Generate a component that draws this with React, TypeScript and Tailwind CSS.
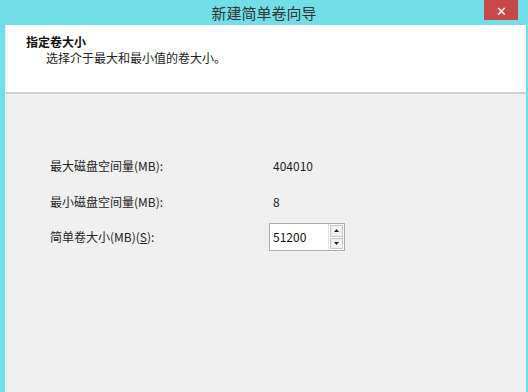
import React from 'react';

const font = { fontFamily: '"Noto Sans CJK SC", "Liberation Sans", sans-serif' };

const Row: React.FC<{ label: React.ReactNode; children: React.ReactNode; h: string }> = ({ label, children, h }) => (
  <div className={`flex items-center ${h}`}>
    <div className="w-[223px] text-[12px] text-[#222]">{label}</div>
    <div className="text-[12px] text-[#222]">{children}</div>
  </div>
);

export default function App() {
  return (
    <div className="w-[528px] h-[392px] bg-[#72dfe8] flex flex-col overflow-hidden" style={font}>
      {/* title bar */}
      <div className="h-[25px] flex items-start relative">
        <div className="flex-1 text-center text-[15px] leading-[25px] text-[#333]">新建简单卷向导</div>
        <div className="absolute right-[10px] top-0 w-[34px] h-[20px] bg-[#c7474b] flex items-center justify-center text-white text-[13px] leading-none">✕</div>
      </div>
      <div className="flex-1 ml-[5px] mr-[2px] border-l border-[#dff7f9] flex flex-col bg-[#f0f0f0]">
        {/* header */}
        <div className="h-[69px] bg-white pl-[20px] pt-[8px] border-b-2 border-[#d0d0d0]">
          <div className="text-[12px] font-bold text-[#111] leading-[17px]">指定卷大小</div>
          <div className="text-[12px] text-[#222] pl-[20px] leading-[16px]">选择介于最大和最小值的卷大小。</div>
        </div>
        {/* body */}
        <div className="pl-[44px] pt-[54px] flex flex-col">
          <Row label="最大磁盘空间量(MB):" h="h-[36px]">404010</Row>
          <Row label="最小磁盘空间量(MB):" h="h-[35px]">8</Row>
          <div className="flex items-center h-[36px]">
            <div className="w-[219px] text-[12px] text-[#222]">
              简单卷大小(MB)(<span className="underline">S</span>):
            </div>
            <div className="flex h-[28px] border border-[#abadb3] bg-white">
              <div className="w-[58px] pl-[3px] text-[12px] text-[#111] leading-[26px]">51200</div>
              <div className="w-[16px] flex flex-col border-l border-[#e0e0e0]">
                <div className="flex-1 m-[1px] bg-[#efefef] border border-[#c8c8c8] flex items-center justify-center">
                  <svg width="5" height="3" viewBox="0 0 5 3"><path d="M0 3 L2.5 0 L5 3 Z" fill="#222" /></svg>
                </div>
                <div className="flex-1 m-[1px] mt-0 bg-[#efefef] border border-[#c8c8c8] flex items-center justify-center">
                  <svg width="5" height="3" viewBox="0 0 5 3"><path d="M0 0 L2.5 3 L5 0 Z" fill="#222" /></svg>
                </div>
              </div>
            </div>
          </div>
        </div>
      </div>
    </div>
  );
}
